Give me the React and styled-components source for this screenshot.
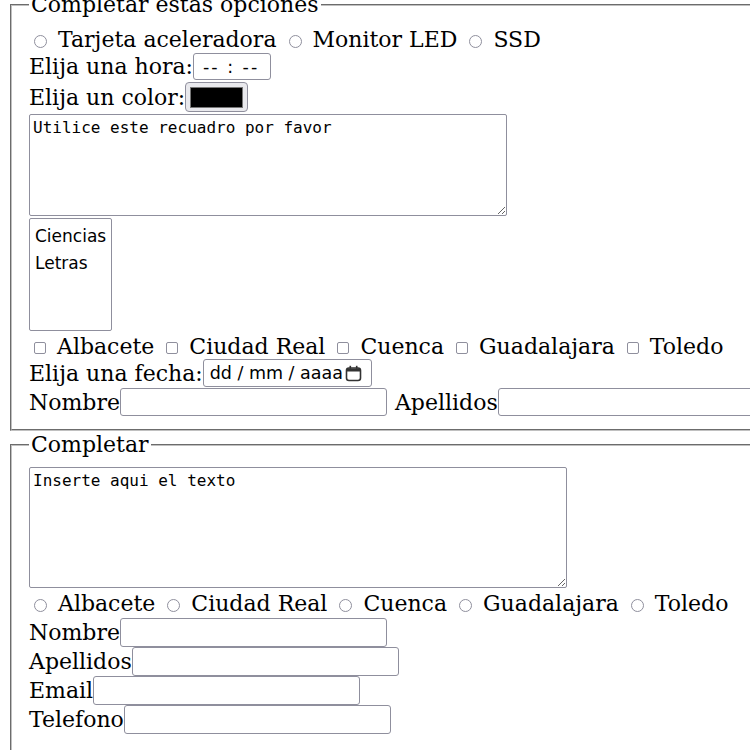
import React from "react";
import styled, { createGlobalStyle } from "styled-components";

const GlobalStyle = createGlobalStyle`
  html {
    overflow: hidden;
  }
  body {
    margin: -8px -40px 0 8px;
    background: #fff;
    color: #000;
    font-family: "DejaVu Serif", serif;
    font-size: 22px;
  }
`;

const Page = styled.div`
  display: flex;
  flex-direction: column;
`;

const Fieldset = styled.fieldset`
  margin: ${(p) => p.$mt || 0}px 2px 0;
  padding: ${(p) => p.$pt}px 17px ${(p) => p.$pb}px;
  border: 2px groove #c0c0c0;
  min-width: 0;
`;

const Legend = styled.legend`
  padding: 0 2px;
  font-size: 22px;
`;

const Line = styled.div`
  display: flex;
  align-items: center;
  height: ${(p) => p.$h}px;
  margin-top: ${(p) => p.$mt || 0}px;
  white-space: nowrap;
`;

const Choice = styled.label`
  display: flex;
  align-items: center;
  margin-right: 7px;
`;

const Radio = styled.input.attrs({ type: "radio" })`
  appearance: none;
  box-sizing: border-box;
  width: 13px;
  height: 13px;
  margin: 4px 11px 0 5px;
  border: 1.5px solid #8f8f9d;
  border-radius: 50%;
  background: #fff;
`;

const Check = styled.input.attrs({ type: "checkbox" })`
  appearance: none;
  box-sizing: border-box;
  width: 12px;
  height: 12px;
  margin: 4px 11px 0 5px;
  border: 1.5px solid #8f8f9d;
  border-radius: 2px;
  background: #fff;
`;

const TextInput = styled.input.attrs({ type: "text" })`
  appearance: none;
  box-sizing: border-box;
  flex: none;
  width: 267px;
  height: ${(p) => p.$h || 28}px;
  margin: 0;
  padding: 0 4px;
  border: 1px solid #8f8f9d;
  border-radius: 3px;
  background: #fff;
  font: 17px "DejaVu Sans", sans-serif;
`;

const FieldBox = styled.div`
  box-sizing: border-box;
  display: flex;
  align-items: center;
  width: ${(p) => p.$w}px;
  height: ${(p) => p.$h}px;
  padding: 0 ${(p) => p.$pr}px 0 ${(p) => p.$pl}px;
  border: 1px solid #8f8f9d;
  border-radius: 3px;
  background: #fff;
  font: 17.5px "DejaVu Sans", sans-serif;
  letter-spacing: ${(p) => p.$ls || 0}px;
`;

const ColorButton = styled.button`
  box-sizing: border-box;
  display: flex;
  align-items: center;
  justify-content: center;
  width: 63px;
  height: 30px;
  margin: 0;
  padding: 0;
  border: 1px solid #8f8f9d;
  border-radius: 4px;
  background: #e9e9ed;
`;

const Swatch = styled.span`
  display: block;
  width: 51px;
  height: 19px;
  background: #000;
  border: 1px solid #777;
`;

const TextArea = styled.textarea`
  display: block;
  box-sizing: border-box;
  width: ${(p) => p.$w}px;
  height: ${(p) => p.$h}px;
  margin: ${(p) => p.$mt || 0}px 0 0;
  padding: 3px 3px;
  border: 1px solid #8f8f9d;
  border-radius: 2px;
  font: 16px "DejaVu Sans Mono", monospace;
  color: #000;
  resize: both;
`;

const ListBox = styled.div`
  box-sizing: border-box;
  width: 83px;
  height: 113px;
  margin-top: 2px;
  padding: 4px 0 0 5px;
  border: 1px solid #8f8f9d;
  border-radius: 2px;
  font: 17px "DejaVu Sans", sans-serif;
`;

const Option = styled.div`
  height: 27px;
  line-height: 27px;
`;

const Gap = styled.span`
  display: inline-block;
  width: 8px;
`;

const CalendarIcon = () => (
  <svg width="17" height="17" viewBox="0 0 17 17" style={{ marginLeft: "auto" }}>
    <rect x="1.5" y="3" width="14" height="12.5" rx="2.5" fill="none" stroke="#333" strokeWidth="1.6" />
    <rect x="2" y="3.5" width="13" height="3" fill="#333" />
    <rect x="4.5" y="0.8" width="1.6" height="3" fill="#333" />
    <rect x="10.9" y="0.8" width="1.6" height="3" fill="#333" />
  </svg>
);

const componentes = ["Tarjeta aceleradora", "Monitor LED", "SSD"];
const provincias = ["Albacete", "Ciudad Real", "Cuenca", "Guadalajara", "Toledo"];

function App() {
  return (
    <Page>
      <GlobalStyle />
      <Fieldset $pt={9} $pb={13}>
        <Legend>Completar estas opciones</Legend>
        <Line $h={26}>
          {componentes.map((c) => (
            <Choice key={c}>
              <Radio name="componente" />
              {c}
            </Choice>
          ))}
        </Line>
        <Line $h={29}>
          Elija una hora:
          <FieldBox $w={78} $h={27} $pl={9} $pr={9} $ls={2}>
            -- : --
          </FieldBox>
        </Line>
        <Line $h={30} $mt={1}>
          Elija un color:
          <ColorButton>
            <Swatch />
          </ColorButton>
        </Line>
        <TextArea $w={478} $h={102} $mt={2} defaultValue="Utilice este recuadro por favor" />
        <ListBox>
          <Option>Ciencias</Option>
          <Option>Letras</Option>
        </ListBox>
        <Line $h={26} $mt={2}>
          {provincias.map((p) => (
            <Choice key={p}>
              <Check />
              {p}
            </Choice>
          ))}
        </Line>
        <Line $h={28}>
          Elija una fecha:
          <FieldBox $w={169} $h={28} $pl={6} $pr={9}>
            dd / mm / aaaa
            <CalendarIcon />
          </FieldBox>
        </Line>
        <Line $h={28} $mt={1}>
          Nombre
          <TextInput />
          <Gap />
          Apellidos
          <TextInput />
        </Line>
      </Fieldset>

      <Fieldset $pt={10} $pb={30} $mt={1}>
        <Legend>Completar</Legend>
        <TextArea $w={538} $h={121} defaultValue="Inserte aqui el texto" />
        <Line $h={29} $mt={1}>
          {provincias.map((p) => (
            <Choice key={p}>
              <Radio name="provincia" />
              {p}
            </Choice>
          ))}
        </Line>
        <Line $h={29}>
          Nombre
          <TextInput $h={29} />
        </Line>
        <Line $h={29}>
          Apellidos
          <TextInput $h={29} />
        </Line>
        <Line $h={29}>
          Email
          <TextInput $h={29} />
        </Line>
        <Line $h={29}>
          Telefono
          <TextInput $h={29} />
        </Line>
      </Fieldset>
    </Page>
  );
}

export default App;
